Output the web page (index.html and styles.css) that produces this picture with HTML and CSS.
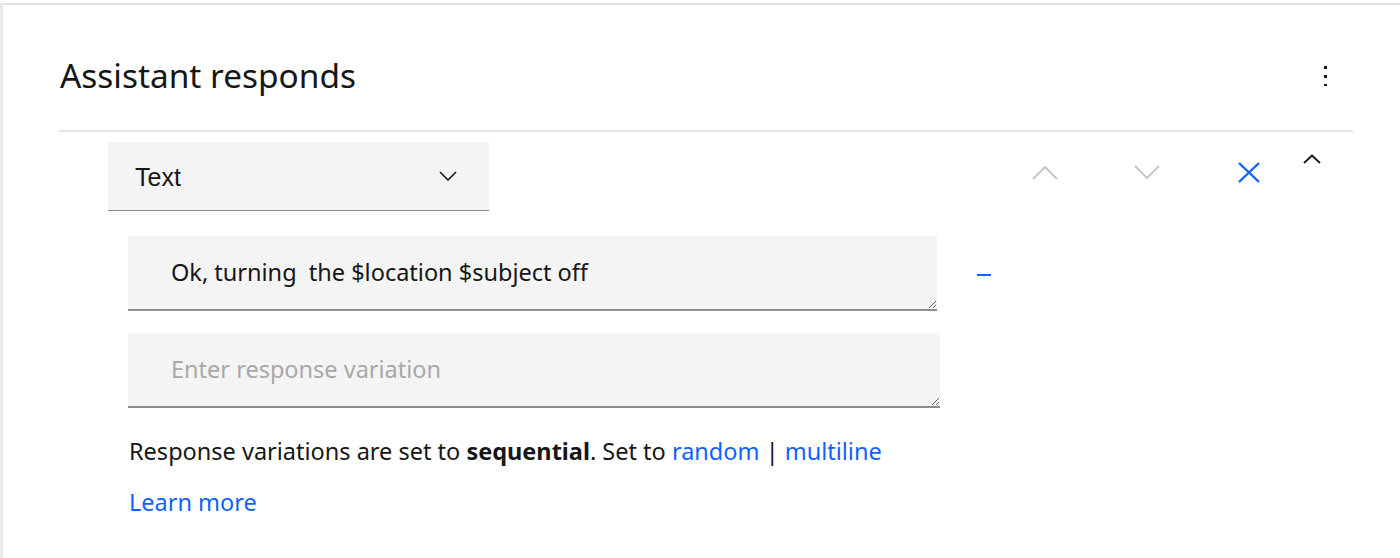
FILE: index.html
```html
<!DOCTYPE html>
<html lang="en">
<head>
<meta charset="utf-8">
<title>Assistant responds</title>
<link rel="stylesheet" href="styles.css">
</head>
<body>
<div class="card">
  <div class="header">
    <h2 class="title">Assistant responds</h2>
    <button class="kebab" aria-label="More options">
      <svg width="4" height="20" viewBox="0 0 4 20"><rect x="0" y="0" width="3" height="3"/><rect x="0" y="9" width="3" height="3"/><rect x="0" y="18" width="3" height="3"/></svg>
    </button>
  </div>
  <div class="divider"></div>
  <div class="type-row">
    <div class="dropdown">
      <span class="dropdown-label">Text</span>
      <svg class="dropdown-chev" width="18" height="10" viewBox="0 0 18 10"><path d="M1 1 L9 9 L17 1" fill="none" stroke="#161616" stroke-width="1.6"/></svg>
    </div>
    <div class="actions">
      <button class="act" aria-label="Move up"><svg width="26" height="15" viewBox="0 0 26 15"><path d="M1 14 L13 2 L25 14" fill="none" stroke="#c6c6c6" stroke-width="2"/></svg></button>
      <button class="act" aria-label="Move down"><svg width="26" height="15" viewBox="0 0 26 15"><path d="M1 1 L13 13 L25 1" fill="none" stroke="#c6c6c6" stroke-width="2"/></svg></button>
      <button class="act" aria-label="Delete"><svg width="22" height="21" viewBox="0 0 22 21"><path d="M1 1 L21 20 M21 1 L1 20" fill="none" stroke="#0f62fe" stroke-width="2.4"/></svg></button>
      <button class="act act-small" aria-label="Collapse"><svg width="18" height="10" viewBox="0 0 18 10"><path d="M1 9 L9 1.5 L17 9" fill="none" stroke="#161616" stroke-width="1.8"/></svg></button>
    </div>
  </div>
  <div class="variations">
    <div class="var-row">
      <textarea class="resp resp-1">Ok, turning  the $location $subject off</textarea>
      <button class="minus" aria-label="Remove"></button>
    </div>
    <div class="var-row">
      <textarea class="resp resp-2" placeholder="Enter response variation"></textarea>
    </div>
  </div>
  <p class="note">Response variations are set to <strong>sequential</strong>. Set to <a href="#">random</a> | <a href="#">multiline</a></p>
  <p class="learn"><a href="#">Learn more</a></p>
</div>
</body>
</html>
```

FILE: styles.css
```css
* { box-sizing: border-box; }
html, body { margin: 0; padding: 0; background: #fff; }
body {
  font-family: "Noto Sans", "Liberation Sans", sans-serif;
  color: #161616;
  width: 1400px;
  height: 558px;
  overflow: hidden;
}
.card {
  margin-top: 3px;
  border-top: 2px solid #e4e4e4;
  border-left: 3px solid #ebebeb;
  height: 555px;
}
.header {
  display: flex;
  justify-content: space-between;
  align-items: flex-start;
  padding: 50px 0 0 57px;
  height: 125px;
}
.title {
  margin: 0;
  font-weight: 400;
  font-size: 33.4px;
  line-height: 40px;
  letter-spacing: 0;
}
.kebab {
  border: 0;
  background: none;
  padding: 0;
  margin: 10px 72px 0 0;
  width: 4px;
  height: 21px;
  display: block;
}
.kebab svg { display: block; fill: #161616; }
.divider {
  margin-left: 56px;
  width: 1294px;
  height: 2px;
  background: #e4e4e4;
}
.type-row {
  display: flex;
  margin-top: 10px;
  padding-left: 105px;
}
.dropdown {
  width: 381px;
  height: 69px;
  background: #f4f4f4;
  border-bottom: 1px solid #8d8d8d;
  display: flex;
  align-items: center;
  justify-content: space-between;
  padding: 2px 32px 0 27px;
}
.dropdown-label {
  font-family: "Liberation Sans", Arial, sans-serif;
  font-size: 25px;
}
.dropdown-chev { display: block; margin-top: -2px; }
.actions {
  display: flex;
  margin-left: auto;
  margin-right: 76px;
  height: 60px;
}
.act {
  border: 0;
  background: none;
  padding: 0;
  width: 102px;
  height: 60px;
  display: flex;
  align-items: center;
  justify-content: center;
}
.act svg { display: block; }
.act-small {
  width: 24px;
  height: 30px;
  align-items: flex-start;
  padding-top: 12px;
}
.variations {
  padding-left: 125px;
  margin-top: 25px;
  display: flex;
  flex-direction: column;
  gap: 22px;
}
.var-row {
  display: flex;
  align-items: center;
}
.resp {
  display: block;
  font-family: "Noto Sans", "Liberation Sans", sans-serif;
  font-size: 23.5px;
  line-height: 28px;
  color: #161616;
  background: #f4f4f4;
  border: 0;
  border-bottom: 2px solid #8d8d8d;
  border-radius: 0;
  padding: 22px 20px 0 43px;
  height: 75px;
  outline: none;
  resize: both;
}
.resp-1 { width: 809px; }
.resp-2 { width: 812px; }
.resp::placeholder { color: #a8a8a8; }
.minus {
  border: 0;
  padding: 0;
  margin: 2px 0 0 40px;
  width: 14px;
  height: 2px;
  background: #0f62fe;
}
.note {
  margin: 29px 0 0 126px;
  font-size: 23.5px;
  line-height: 28px;
}
.note strong { font-weight: 700; }
a { color: #0f62fe; text-decoration: none; }
.learn {
  margin: 23px 0 0 126px;
  font-size: 23.5px;
  line-height: 28px;
}
```
